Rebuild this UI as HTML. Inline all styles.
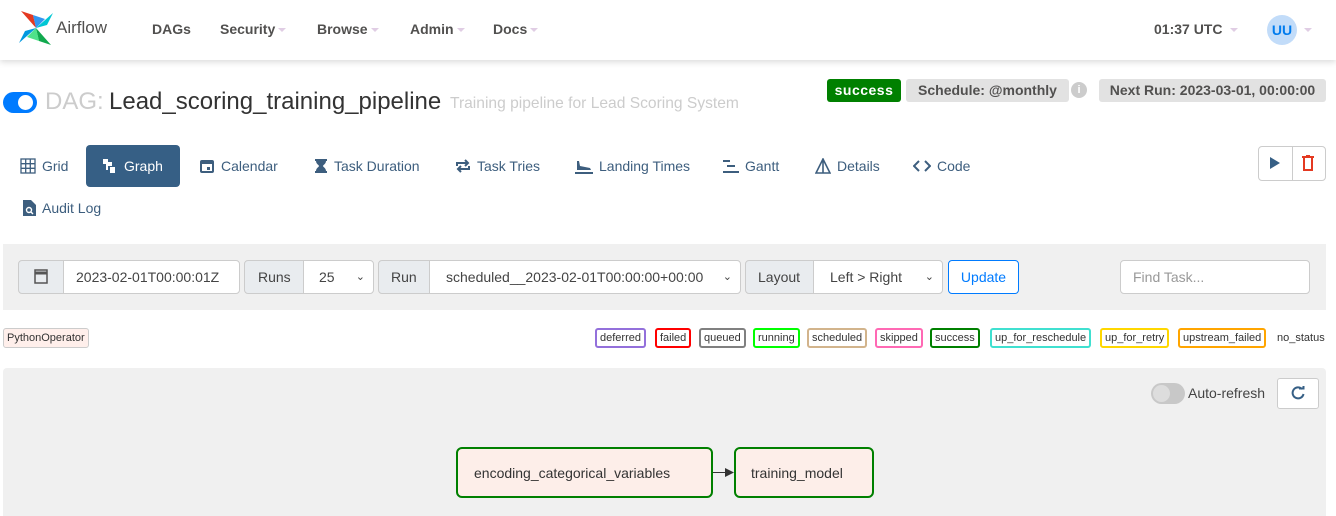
<!DOCTYPE html><html><head><meta charset="utf-8"><style>
*{box-sizing:border-box;margin:0;padding:0}
body{width:1336px;height:516px;overflow:hidden;background:#fff;font-family:"Liberation Sans",sans-serif;position:relative;color:#51504f}
.a{position:absolute;white-space:nowrap}
.nav{left:0;top:0;width:1336px;height:60px;background:#fff;box-shadow:0 2px 6px rgba(0,0,0,.15)}
.ni{font-weight:bold;font-size:14px;color:#51504f;top:21px}
.car{display:inline-block;width:0;height:0;border-left:4px solid transparent;border-right:4px solid transparent;border-top:4px solid #e0cde4;margin-left:3px;vertical-align:middle}
.tab{top:145px;height:42px;line-height:42px;font-size:14px;color:#3d5e7e;padding:0 0}
.tab svg{vertical-align:-3px;margin-right:6px}
.lg{top:328px;height:20px;line-height:16px;font-size:11px;color:#333;border:2px solid;border-radius:3px;padding:0 3px}
.box{border:1px solid #ccc;background:#fff;font-size:14px;color:#444;height:34px;line-height:32px;top:260px}
.gb{background:#e9ecef}
</style></head><body>
<div class="a nav"></div>
<svg class="a" style="left:17px;top:9px" width="38" height="38" viewBox="0 0 38 38">
<path d="M19 19 L4 2 L16 6 Z" fill="#e43921"/><path d="M19 19 L36 4 L30 16 Z" fill="#00c7d4"/><path d="M19 19 L34 36 L22 32 Z" fill="#11a94e"/><path d="M19 19 L2 34 L8 22 Z" fill="#0098e0"/><path d="M19 19 L16 6 L28 10 Z" fill="#017cee" opacity=".8"/><path d="M19 19 L22 32 L10 28 Z" fill="#04d659" opacity=".7"/></svg>
<div class="a" style="left:56px;top:18px;font-size:17px;color:#51504f">Airflow</div>
<div class="a ni" style="left:152px">DAGs</div>
<div class="a ni" style="left:220px">Security<span class="car"></span></div>
<div class="a ni" style="left:317px">Browse<span class="car"></span></div>
<div class="a ni" style="left:410px">Admin<span class="car"></span></div>
<div class="a ni" style="left:493px">Docs<span class="car"></span></div>
<div class="a ni" style="left:1154px">01:37 UTC<span class="car" style="margin-left:8px"></span></div>
<div class="a" style="left:1267px;top:15px;width:30px;height:30px;border-radius:50%;background:#c2dcf9;color:#017cee;font-weight:bold;font-size:14px;text-align:center;line-height:30px">UU</div>
<span class="a car" style="left:1301px;top:28px"></span>
<div class="a" style="left:3px;top:92px;width:34px;height:21px;border-radius:11px;background:#007bff"></div>
<div class="a" style="left:18px;top:95px;width:15px;height:15px;border-radius:50%;background:#fff"></div>
<div class="a" style="left:45px;top:88px;font-size:24px;color:#ccc">DAG:</div>
<div class="a" style="left:109px;top:88px;font-size:24px;color:#333">Lead_scoring_training_pipeline</div>
<div class="a" style="left:450px;top:95px;font-size:15.6px;color:#ccc">Training pipeline for Lead Scoring System</div>
<div class="a" style="left:827px;top:79px;width:74px;height:23px;background:#008000;color:#fff;font-weight:bold;font-size:14px;text-align:center;line-height:23px;border-radius:3px;letter-spacing:.5px">success</div>
<div class="a" style="left:906px;top:79px;width:163px;height:23px;background:#e2e2e2;color:#51504f;font-weight:bold;font-size:14px;text-align:center;line-height:23px;border-radius:3px">Schedule: @monthly</div>
<div class="a" style="left:1071px;top:82px;width:16px;height:16px;border-radius:50%;background:#ccc;color:#fff;font-size:11px;font-weight:bold;text-align:center;line-height:16px">i</div>
<div class="a" style="left:1099px;top:79px;width:227px;height:23px;background:#e2e2e2;color:#51504f;font-weight:bold;font-size:14px;text-align:center;line-height:23px;border-radius:3px">Next Run: 2023-03-01, 00:00:00</div>

<div class="a tab" style="left:20px"><svg width="16" height="16" viewBox="0 0 16 16" fill="none" stroke="#3d5e7e" stroke-width="1.3"><rect x="1" y="1" width="14" height="14"/><path d="M5.7 1v14M10.3 1v14M1 5.7h14M1 10.3h14"/></svg>Grid</div>
<div class="a tab" style="left:86px;width:94px;background:#365f85;color:#fff;border-radius:4px;padding-left:16px"><svg width="16" height="16" viewBox="0 0 16 16" fill="#fff"><rect x="1" y="1" width="5" height="5"/><rect x="6" y="4" width="4" height="4"/><rect x="8" y="9" width="5" height="6"/><rect x="4" y="6" width="2" height="6"/></svg>Graph</div>
<div class="a tab" style="left:199px"><svg width="16" height="16" viewBox="0 0 16 16"><rect x="1" y="2" width="14" height="13" rx="2" fill="#3d5e7e"/><rect x="3" y="6" width="10" height="7" fill="#fff"/><rect x="8" y="9" width="3" height="3" fill="#3d5e7e"/></svg>Calendar</div>
<div class="a tab" style="left:314px"><svg width="14" height="16" viewBox="0 0 14 16" fill="#3d5e7e"><path d="M1 1h12v2h-1c0 3-3 4-3 5s3 2 3 5h1v2H1v-2h1c0-3 3-4 3-5S2 6 2 3H1z"/></svg>Task Duration</div>
<div class="a tab" style="left:455px"><svg width="16" height="16" viewBox="0 0 16 16" fill="none" stroke="#3d5e7e" stroke-width="2"><path d="M2 8V5h11M10 2l3 3-3 3M14 8v3H3M6 14l-3-3 3-3"/></svg>Task Tries</div>
<div class="a tab" style="left:575px"><svg width="18" height="16" viewBox="0 0 18 16" fill="#3d5e7e"><rect x="0" y="14" width="18" height="2"/><path d="M2 3l2 0 1 5 10 2 1 2H2z"/></svg>Landing Times</div>
<div class="a tab" style="left:723px"><svg width="16" height="16" viewBox="0 0 16 16" fill="#3d5e7e"><rect x="0" y="2" width="7" height="2"/><rect x="4" y="7" width="8" height="2"/><rect x="0" y="13" width="16" height="2"/></svg>Gantt</div>
<div class="a tab" style="left:815px"><svg width="16" height="16" viewBox="0 0 16 16" fill="none" stroke="#3d5e7e" stroke-width="1.6"><path d="M8 1L1 15h14zM8 1v14"/></svg>Details</div>
<div class="a tab" style="left:913px"><svg width="18" height="16" viewBox="0 0 18 16" fill="none" stroke="#3d5e7e" stroke-width="2"><path d="M6 3L1 8l5 5M12 3l5 5-5 5"/></svg>Code</div>
<div class="a tab" style="left:23px;top:187px"><svg width="13" height="16" viewBox="0 0 13 16"><path d="M0 0h8l5 5v11H0z" fill="#3d5e7e"/><circle cx="6" cy="10" r="2.5" fill="none" stroke="#fff" stroke-width="1.4"/><path d="M8 12l2 2" stroke="#fff" stroke-width="1.4"/></svg>Audit Log</div>
<div class="a" style="left:1258px;top:146px;width:68px;height:35px;border:1px solid #ccc;border-radius:4px"></div>
<div class="a" style="left:1292px;top:146px;width:1px;height:35px;background:#ccc"></div>
<svg class="a" style="left:1270px;top:157px" width="10" height="12"><path d="M0 0l10 6-10 6z" fill="#365f85"/></svg>
<svg class="a" style="left:1302px;top:155px" width="12" height="16" fill="none" stroke="#e43921" stroke-width="2"><path d="M0 2h12M4 1h4M2 3v12h8V3"/></svg>

<div class="a" style="left:3px;top:244px;width:1323px;height:66px;background:#f0f0f0"></div>
<div class="a box gb" style="left:18px;width:46px;border-radius:4px 0 0 4px"></div>
<svg class="a" style="left:34px;top:268px" width="14" height="16" fill="none" stroke="#555" stroke-width="1.5"><rect x="1" y="2" width="12" height="13"/><path d="M1 5h12" stroke-width="3"/></svg>
<div class="a box" style="left:63px;width:177px;padding-left:12px;border-radius:0 4px 4px 0">2023-02-01T00:00:01Z</div>
<div class="a box gb" style="left:244px;width:60px;padding-left:13px;border-radius:4px 0 0 4px">Runs</div>
<div class="a box" style="left:303px;width:71px;padding-left:15px;border-radius:0 4px 4px 0">25<span style="position:absolute;right:8px;font-size:11px">&#8964;</span></div>
<div class="a box gb" style="left:378px;width:52px;padding-left:12px;border-radius:4px 0 0 4px">Run</div>
<div class="a box" style="left:429px;width:312px;padding-left:16px;border-radius:0 4px 4px 0">scheduled__2023-02-01T00:00:00+00:00<span style="position:absolute;right:8px;font-size:11px">&#8964;</span></div>
<div class="a box gb" style="left:745px;width:69px;padding-left:12px;border-radius:4px 0 0 4px">Layout</div>
<div class="a box" style="left:813px;width:130px;padding-left:16px;border-radius:0 4px 4px 0">Left &gt; Right<span style="position:absolute;right:8px;font-size:11px">&#8964;</span></div>
<div class="a box" style="left:948px;width:71px;text-align:center;color:#007bff;border-color:#007bff;border-radius:4px">Update</div>
<div class="a box" style="left:1120px;width:190px;padding-left:12px;color:#999;border-radius:4px">Find Task...</div>

<div class="a lg" style="left:3px;border:1px solid #ccc;background:#ffefeb;line-height:18px">PythonOperator</div>
<div class="a lg" style="left:595px;border-color:#9370db">deferred</div>
<div class="a lg" style="left:655px;border-color:#f00">failed</div>
<div class="a lg" style="left:699px;border-color:#808080">queued</div>
<div class="a lg" style="left:753px;border-color:#0f0">running</div>
<div class="a lg" style="left:807px;border-color:#d2b48c">scheduled</div>
<div class="a lg" style="left:875px;border-color:#ff69b4">skipped</div>
<div class="a lg" style="left:930px;border-color:#008000">success</div>
<div class="a lg" style="left:990px;border-color:#40e0d0">up_for_reschedule</div>
<div class="a lg" style="left:1100px;border-color:#ffd700">up_for_retry</div>
<div class="a lg" style="left:1178px;border-color:#ffa500">upstream_failed</div>
<div class="a lg" style="left:1272px;border-color:transparent">no_status</div>

<div class="a" style="left:3px;top:368px;width:1323px;height:148px;background:#f0f0f0;border-radius:4px 4px 0 0"></div>
<div class="a" style="left:1151px;top:383px;width:34px;height:21px;border-radius:11px;background:#c8c8c8"></div>
<div class="a" style="left:1153px;top:385px;width:17px;height:17px;border-radius:50%;background:#ddd"></div>
<div class="a" style="left:1188px;top:385px;font-size:14px;color:#444">Auto-refresh</div>
<div class="a" style="left:1277px;top:378px;width:42px;height:31px;background:#fff;border:1px solid #ccc;border-radius:3px"></div>
<svg class="a" style="left:1291px;top:386px" width="14" height="14" fill="none" stroke="#365f85" stroke-width="2"><path d="M11 3A5.5 5.5 0 1 0 12.5 8"/><path d="M8 2.5h4.5V-1" /></svg>
<div class="a" style="left:456px;top:447px;width:257px;height:51px;border:2px solid #008000;border-radius:6px;background:#fdeee9;font-size:14px;color:#333;line-height:49px;padding-left:16px">encoding_categorical_variables</div>
<div class="a" style="left:713px;top:472px;width:16px;height:1px;background:#333"></div>
<svg class="a" style="left:725px;top:468px" width="9" height="9"><path d="M0 0l9 4.5-9 4.5z" fill="#333"/></svg>
<div class="a" style="left:734px;top:447px;width:140px;height:51px;border:2px solid #008000;border-radius:6px;background:#fdeee9;font-size:14px;color:#333;line-height:49px;padding-left:15px">training_model</div>
</body></html>
